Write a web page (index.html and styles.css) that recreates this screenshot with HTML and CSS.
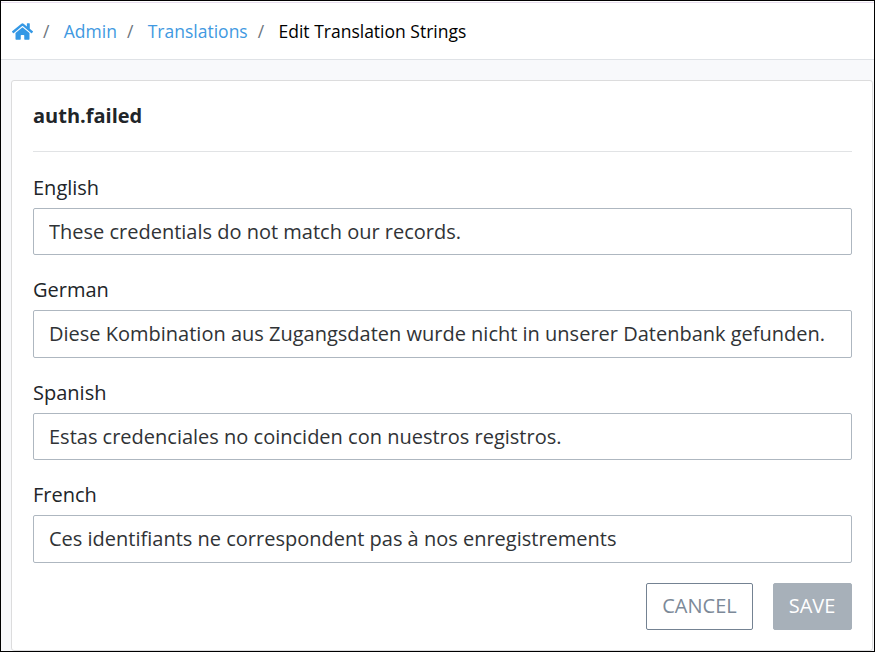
FILE: index.html
```html
<!DOCTYPE html>
<html lang="en">
<head>
<meta charset="utf-8">
<title>Edit Translation Strings</title>
<link rel="stylesheet" href="styles.css">
</head>
<body>
<div class="page">
<nav class="breadcrumb">
<svg class="home" viewBox="0 0 576 512"><path fill="currentColor" d="M280.4 148.3L96 300.1V464a16 16 0 0 0 16 16l112.1-.3a16 16 0 0 0 15.900-16V368a16 16 0 0 1 16-16h64a16 16 0 0 1 16 16v95.600a16 16 0 0 0 16 16.100L464 480a16 16 0 0 0 16-16V300L295.700 148.300a12.200 12.200 0 0 0-15.300 0zM571.600 251.500L488 182.600V44a12 12 0 0 0-12-12h-56a12 12 0 0 0-12 12v72.600L318.500 43a48 48 0 0 0-61 0L4.300 251.500a12 12 0 0 0-1.600 16.900l25.500 31a12 12 0 0 0 16.900 1.600l235.200-193.700a12.200 12.200 0 0 1 15.300 0L530.900 301a12 12 0 0 0 16.900-1.600l25.500-31a12 12 0 0 0-1.700-16.900z"/></svg>
<span class="sep">/</span><a>Admin</a><span class="sep">/</span><a>Translations</a><span class="sep">/</span><span>Edit Translation Strings</span>
</nav>
<main class="content">
<form class="card">
<h1>auth.failed</h1>
<label for="en">English</label><input id="en" class="field" value="These credentials do not match our records.">
<label for="de">German</label><input id="de" class="field" value="Diese Kombination aus Zugangsdaten wurde nicht in unserer Datenbank gefunden.">
<label for="es">Spanish</label><input id="es" class="field" value="Estas credenciales no coinciden con nuestros registros.">
<label for="fr">French</label><input id="fr" class="field" value="Ces identifiants ne correspondent pas à nos enregistrements">
<div class="actions"><button class="cancel" type="button">CANCEL</button><button class="save" type="button">SAVE</button></div>
</form>
</main>
</div>
</body>
</html>
```
FILE: styles.css
```css
* { box-sizing: border-box; }
body { margin: 0; font-family: "Open Sans", sans-serif; color: #212529; }
.page { height: 652px; border: 1px solid #000; display: flex; flex-direction: column; overflow: hidden; background: #f8f9fb; }
.breadcrumb { height: 59px; flex: none; display: flex; align-items: center; padding: 2px 0 0 11px; background: linear-gradient(#fff 1px, #e9dff0 1px, #e9dff0 2px, #fff 2px); border-bottom: 1px solid #dfe2e6; font-size: 17.5px; color: #000; }
.breadcrumb a { color: #4199e1; }
.home { width: 21px; height: 19px; color: #3498e5; }
.sep { color: #6c757d; width: 30.8px; padding-left: 10px; }
.content { padding: 20px 1px 0 10px; flex: 1; display: flex; }
.card { flex: 1; background: #fff; border: 1px solid #dcdcdd; border-radius: 3px; padding: 0 20px 0 21px; }
h1 { margin: 0 0 21px; height: 71px; line-height: 70px; font-size: 20px; font-weight: 700; border-bottom: 1px solid #e1e3e5; }
label { display: block; font-size: 20px; line-height: 30px; margin-bottom: 5px; }
.field { display: block; width: 100%; height: 47.4px; background: #fff; color: #303336; border: 1px solid #aeb7c0; border-radius: 2px; padding: 0 15px 0.4px; font: 20px "Open Sans", sans-serif; margin-bottom: 20px; }
.actions { display: flex; justify-content: flex-end; gap: 20px; }
button { height: 47px; padding: 0 0 2px; font: 20px "Open Sans", sans-serif; border-radius: 2px; }
.cancel { width: 107px; background: #fff; border: 1px solid #748292; color: #7c8998; }
.save { width: 79px; padding-right: 1px; background: #a7b0b9; border: 1px solid #a7b0b9; color: #fff; }
```
